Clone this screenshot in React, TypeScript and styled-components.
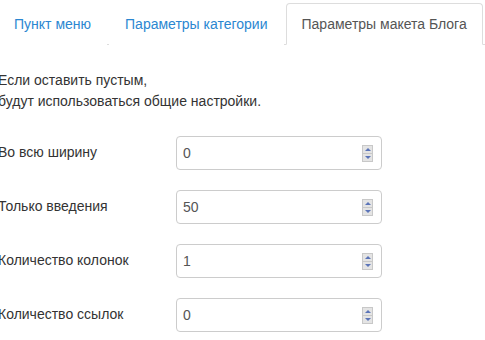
import React from 'react';
import styled, { createGlobalStyle } from 'styled-components';

const GlobalStyle = createGlobalStyle`
	html, body {
		margin: 0;
		padding: 0;
		background: #fff;
		font-family: 'Liberation Sans', Arial, sans-serif;
		color: #333;
	}
`;

const Page = styled.div`
	margin-left: -2px;
	padding-top: 3px;
	width: 500px;
`;

const Tabs = styled.ul`
	display: flex;
	margin: 0;
	padding: 0;
	list-style: none;
	border-bottom: 1px solid #ddd;
`;

const Tab = styled.li<{ $active?: boolean }>`
	margin-right: 2px;
	margin-bottom: -1px;
	padding: 10px 15px;
	font-size: 14px;
	line-height: 20px;
	white-space: nowrap;
	color: ${({ $active }) => ($active ? '#555' : '#2b87d1')};
	background: #fff;
	border: 1px solid ${({ $active }) => ($active ? '#ddd' : 'transparent')};
	border-bottom-color: transparent;
	border-radius: 4px 4px 0 0;
`;

const Pane = styled.div`
	padding-top: 25px;
`;

const Help = styled.p`
	margin: 0 0 24px;
	font-size: 14px;
	line-height: 21px;
	color: #333;
`;

const Rows = styled.div`
	display: flex;
	flex-direction: column;
	gap: 20px;
`;

const Row = styled.div`
	display: flex;
	align-items: center;
`;

const Label = styled.label`
	width: 178px;
	margin-top: -3px;
	font-size: 14px;
	line-height: 20px;
	color: #333;
`;

const Field = styled.div`
	display: flex;
	align-items: center;
	box-sizing: border-box;
	width: 206px;
	height: 34px;
	padding: 0 8px 0 6px;
	border: 1px solid #ccc;
	border-radius: 4px;
	background: #fff;
`;

const Value = styled.input`
	flex: 1;
	min-width: 0;
	border: none;
	outline: none;
	padding: 0;
	font-family: inherit;
	font-size: 14px;
	color: #555;
	background: transparent;
`;

const Spinner = styled.div`
	display: flex;
	flex-direction: column;
	width: 11px;
	height: 17px;
	border: 1px solid #c8c8c8;
	box-sizing: border-box;
	background: #e4e4e4;
`;

const Step = styled.span<{ $down?: boolean }>`
	flex: 1;
	display: flex;
	align-items: center;
	justify-content: center;
	${({ $down }) => ($down ? 'border-top: 1px solid #c8c8c8;' : '')}
	&::after {
		content: '';
		width: 0;
		height: 0;
		border-left: 3px solid transparent;
		border-right: 3px solid transparent;
		${({ $down }) =>
			$down ? 'border-top: 3px solid #5b74b8;' : 'border-bottom: 3px solid #5b74b8;'}
	}
`;

const fields = [
	{ label: 'Во всю ширину', value: '0' },
	{ label: 'Только введения', value: '50' },
	{ label: 'Количество колонок', value: '1' },
	{ label: 'Количество ссылок', value: '0' },
];

const App: React.FunctionComponent = () => {
	return (
		<Page>
			<GlobalStyle />
			<Tabs>
				<Tab>Пункт меню</Tab>
				<Tab>Параметры категории</Tab>
				<Tab $active>Параметры макета Блога</Tab>
			</Tabs>
			<Pane>
				<Help>
					Если оставить пустым,
					<br />
					будут использоваться общие настройки.
				</Help>
				<Rows>
					{fields.map((item, index) => (
						<Row key={index}>
							<Label>{item.label}</Label>
							<Field>
								<Value defaultValue={item.value} />
								<Spinner>
									<Step />
									<Step $down />
								</Spinner>
							</Field>
						</Row>
					))}
				</Rows>
			</Pane>
		</Page>
	);
};

export default App;
